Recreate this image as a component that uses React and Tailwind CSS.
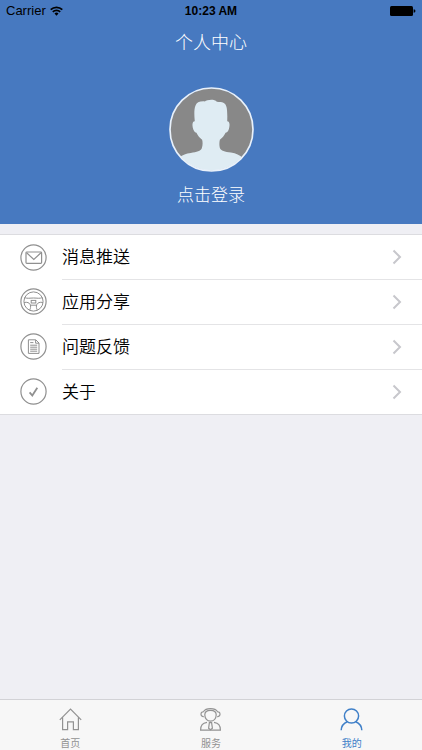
import React, { useState } from "react";

const MailIcon = () => (
    <g strokeWidth="1.2">
        <rect x="6" y="8" width="15.6" height="11.4" rx="0.8" />
        <path d="M6.6 8.8l7.2 6.6L21 8.8" />
    </g>
);

const WheelIcon = () => (
    <>
        <circle cx="13.5" cy="13.5" r="9.6" />
        <path d="M4.6 9.6c2.6 1.2 5.4.4 8.9.4s6.3.8 8.9-.4" />
        <path d="M4 14.4c3.4-.4 5.2.2 6.2 2.2.8 1.8.4 3.8-.6 5.6M23 14.4c-3.4-.4-5.2.2-6.2 2.2-.8 1.8-.4 3.8.6 5.6" />
        <path d="M10.2 17.2h6.6" />
        <rect x="11.2" y="12.4" width="4.6" height="2.6" />
    </>
);

const DocumentIcon = () => (
    <>
        <path d="M8.4 6.8h7.4l3.2 3.2v10.4H8.4zM15.6 7v3.2H19" />
        <path d="M10.2 9.6h3.2M10.2 12.2h7M10.2 14.2h7M10.2 16.2h7M10.2 18.2h7" />
    </>
);

const CheckIcon = () => <path d="M9.6 14.4l2.7 3.2 5-7.8" strokeWidth="1.8" />;

const menuItems = [
    { label: "消息推送", Icon: MailIcon },
    { label: "应用分享", Icon: WheelIcon },
    { label: "问题反馈", Icon: DocumentIcon },
    { label: "关于", Icon: CheckIcon },
];

const HomeIcon = () => (
    <path d="M.8 11.8L11.5 1 22.2 11.8M3.6 9.4v12.2h5v-7.8h5.8v7.8h5V9.4" />
);

const ServiceIcon = () => (
    <>
        <path d="M4.4 3.8C5.6 1.8 8.2.7 11.5.7s5.9 1.1 7.1 3.1" />
        <path d="M5.8 6.8c0-2.8 2.2-4.4 5.7-4.4s5.7 1.6 5.7 4.4c0 3.8-2.4 6.4-5.7 6.4s-5.7-2.6-5.7-6.4z" />
        <path d="M4.8 3.8c-1.6-.2-2.8.8-2.8 2.4s1.2 2.6 2.8 2.4M18.2 3.8c1.6-.2 2.8.8 2.8 2.4s-1.2 2.6-2.8 2.4" />
        <path d="M8 14.4c-4.4.8-6.4 2.4-6.4 7.8h19.8c0-5.4-2-7-6.4-7.8" />
        <path d="M10.4 14.6h2.2l.8 5.6-1.9 1.6-1.9-1.6z" />
    </>
);

const MineIcon = () => (
    <g strokeWidth="1.5">
        <circle cx="11.5" cy="8" r="7.1" />
        <path d="M1.2 22.2c.2-4 2.6-7 6.2-8.4M21.8 22.2c-.2-4-2.6-7-6.2-8.4" />
    </g>
);

const tabs = [
    { id: "home", label: "首页", Icon: HomeIcon },
    { id: "service", label: "服务", Icon: ServiceIcon },
    { id: "mine", label: "我的", Icon: MineIcon },
];

function StatusBar() {
    return (
        <div className="grid h-5 grid-cols-3 items-center px-1.5 pt-0.5 font-['Liberation_Sans',sans-serif] text-xs text-black">
            <div className="flex items-center gap-1">
                <span className="text-[13px]">Carrier</span>
                <svg viewBox="0 0 13 10" className="h-2.5 w-[13px]" fill="none" stroke="currentColor" strokeWidth="1.7">
                    <path d="M.7 3.7a8.2 8.2 0 0 1 11.6 0M2.8 5.9a5.2 5.2 0 0 1 7.4 0" />
                    <path d="M4.5 7.6a2.8 2.8 0 0 1 4 0l-2 2.1z" fill="currentColor" stroke="none" />
                </svg>
            </div>
            <span className="text-center font-bold">10:23 AM</span>
            <svg viewBox="0 0 26 10" className="h-2.5 w-6.5 justify-self-end" fill="currentColor">
                <rect x="0" y="0" width="23" height="10" rx="1.5" />
                <path d="M23.6 3.2c1.2.1 1.8.8 1.8 1.8s-.6 1.7-1.8 1.8z" />
            </svg>
        </div>
    );
}

function Avatar() {
    return (
        <svg viewBox="55 36 254 254" className="h-[85px] w-[85px]">
            <defs>
                <clipPath id="avatar-clip">
                    <circle cx="182" cy="163" r="123" />
                </clipPath>
            </defs>
            <circle cx="182" cy="163" r="123" fill="#888" />
            <path
                clipPath="url(#avatar-clip)"
                fill="#dfecf3"
                d="M132 138C130 118 130 102 134 92C137 82 147 78 162 79C168 74 190 70 198 80C206 81 212 80 219 84C228 90 230 102 229 138C236 138 237 147 235 157C233 167 230 172 224 173C220 182 214 188 207 194C205 202 205 210 207 218C210 226 222 229 240 232C256 235 266 239 276 248V292H86V246C96 238 106 235 120 233C138 230 150 227 153 219C156 210 156 202 154 194C147 188 141 182 137 173C131 171 128 166 126 157C124 147 125 138 132 138Z"
            />
            <circle cx="182" cy="163" r="124" fill="none" stroke="#e9f1fa" strokeWidth="5" />
        </svg>
    );
}

function MenuItem({ label, Icon, first }) {
    return (
        <li>
            <button type="button" className="flex w-full items-center pl-5 text-left">
                <svg viewBox="0 0 27 27" className="mr-[15px] h-[27px] w-[27px] shrink-0" fill="none" stroke="#909090" strokeWidth="1">
                    <circle cx="13.5" cy="13.5" r="12.6" strokeWidth="1.2" />
                    <Icon />
                </svg>
                <span
                    className={`flex flex-1 items-center justify-between pr-5 ${
                        first ? "h-11" : "h-[45px] border-t border-[#e4e4e6]"
                    }`}
                >
                    <span className="pt-0.5 text-[17px] font-[350] text-black">{label}</span>
                    <svg viewBox="0 0 10 16" className="h-4 w-2.5" fill="none" stroke="#c7c7cc" strokeWidth="2">
                        <path d="M1.5 1.5L8 8l-6.5 6.5" />
                    </svg>
                </span>
            </button>
        </li>
    );
}

function TabBar({ activeTab, onTabSelect }) {
    return (
        <nav className="grid grid-cols-3 border-t border-[#d2d2d6] bg-[#f7f7f7]">
            {tabs.map(({ id, label, Icon }) => (
                <button
                    key={id}
                    type="button"
                    onClick={() => onTabSelect(id)}
                    className={`flex flex-col items-center gap-[7px] pt-2 ${
                        activeTab === id ? "text-[#4080c8]" : "text-[#929292]"
                    }`}
                >
                    <svg viewBox="0 0 23 23" className="h-[23px] w-[23px] shrink-0" fill="none" stroke="currentColor" strokeWidth="1.2">
                        <Icon />
                    </svg>
                    <span className="text-[10px] leading-3">{label}</span>
                </button>
            ))}
        </nav>
    );
}

function App() {
    const [activeTab, setActiveTab] = useState("mine");

    return (
        <div className="flex min-h-screen flex-col bg-[#efeff4] font-['Liberation_Sans','Noto_Sans_CJK_SC',sans-serif]">
            <header className="bg-[#4779c0] text-white">
                <StatusBar />
                <h1 className="flex h-11 items-center justify-center pt-0.5 text-lg font-light">
                    个人中心
                </h1>
                <button type="button" className="mx-auto flex flex-col items-center gap-3 pt-[23px] pb-4">
                    <Avatar />
                    <span className="text-[17px] leading-6 font-light">点击登录</span>
                </button>
            </header>

            <main className="flex-1 pt-2.5">
                <ul className="border-y border-[#dcdce0] bg-white">
                    {menuItems.map((item, index) => (
                        <MenuItem key={item.label} {...item} first={index === 0} />
                    ))}
                </ul>
            </main>

            <TabBar activeTab={activeTab} onTabSelect={setActiveTab} />
        </div>
    );
}

export default App;
